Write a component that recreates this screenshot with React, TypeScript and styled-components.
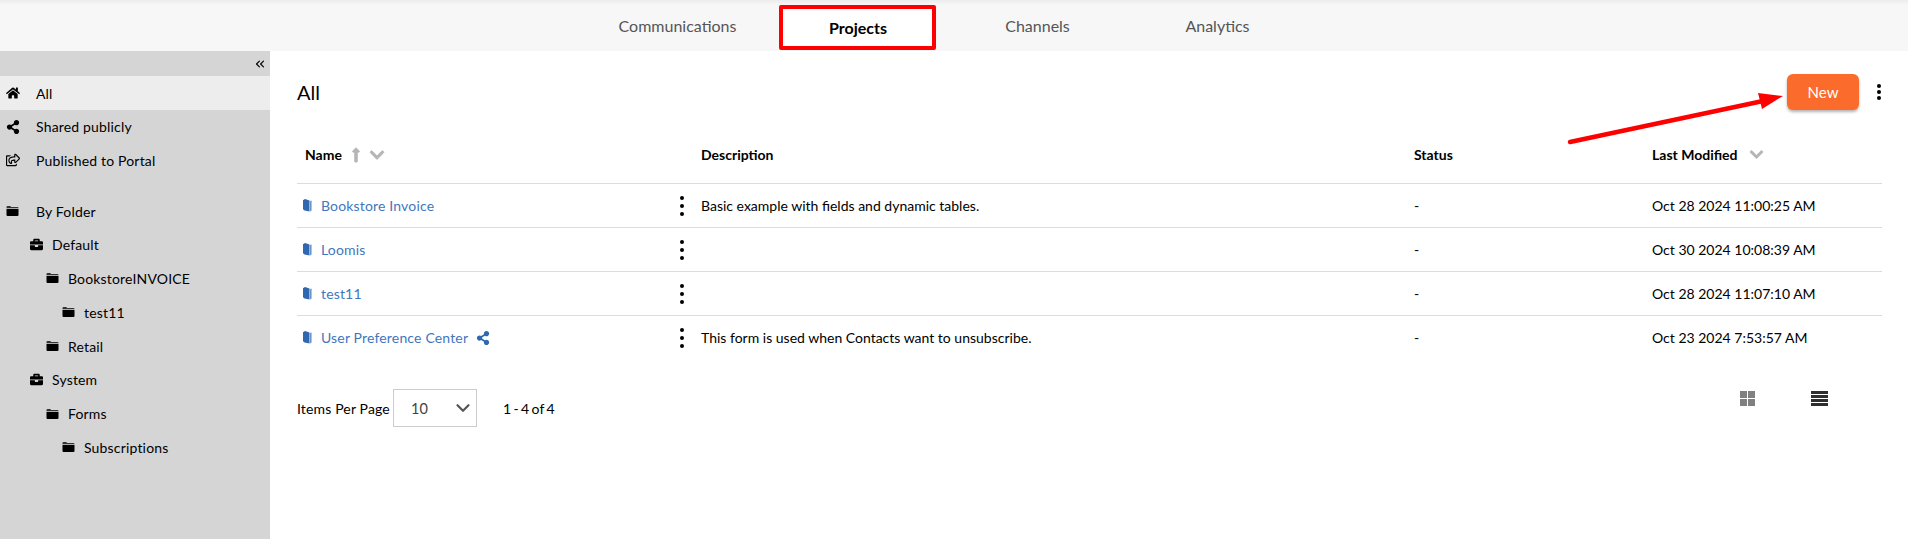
import React from 'react'
import styled, { createGlobalStyle } from 'styled-components'
import { FaHome, FaShareAlt, FaRegShareSquare, FaBriefcase, FaChevronDown, FaLongArrowAltUp } from 'react-icons/fa'
import { ChevronDown, ChevronsLeft } from 'lucide-react'

const GlobalStyle = createGlobalStyle`
  html, body {
    margin: 0;
    padding: 0;
    background: #fff;
    font-family: Lato, 'Liberation Sans', sans-serif;
    font-size: 14px;
    color: #000;
  }
`

type TabName = { label: string; active?: boolean }
const TABS: TabName[] = [
  { label: 'Communications' },
  { label: 'Projects', active: true },
  { label: 'Channels' },
  { label: 'Analytics' },
]

const PROJECTS = [
  { name: 'Bookstore Invoice', description: 'Basic example with fields and dynamic tables.', modified: 'Oct 28 2024 11:00:25 AM' },
  { name: 'Loomis', description: '', modified: 'Oct 30 2024 10:08:39 AM' },
  { name: 'test11', description: '', modified: 'Oct 28 2024 11:07:10 AM' },
  { name: 'User Preference Center', description: 'This form is used when Contacts want to unsubscribe.', modified: 'Oct 23 2024 7:53:57 AM', shared: true },
]

const FOLDERS = [
  { label: 'Default', level: 1, icon: 'case' },
  { label: 'BookstoreINVOICE', level: 2, icon: 'folder' },
  { label: 'test11', level: 3, icon: 'folder' },
  { label: 'Retail', level: 2, icon: 'folder' },
  { label: 'System', level: 1, icon: 'case' },
  { label: 'Forms', level: 2, icon: 'folder' },
  { label: 'Subscriptions', level: 3, icon: 'folder' },
]

const FolderIcon = () => (
  <svg width="13" height="10" viewBox="0 0 13 10">
    <path d="M0.5 1.2 Q0.5 0 1.5 0 H4 Q4.8 0 5 1 H11.5 Q12.5 1 12.5 2 V2.3 H0.5 Z" fill="#333" />
    <path d="M0.5 3 H12.5 V9 Q12.5 10 11.5 10 H1.5 Q0.5 10 0.5 9 Z" fill="#000" />
  </svg>
)

const BookIcon = () => (
  <svg width="9" height="13" viewBox="0 0 9 13">
    <path d="M0 1.2 L2 0 L6.5 1.6 V12.6 L1.6 11.4 Q0 11 0 9.6 Z" fill="#2f68b0" />
    <path d="M7 2 L8.6 1.4 V11.6 L7 12.6 Z" fill="#6d97cc" />
  </svg>
)

const GridIcon = () => (
  <svg width="15" height="15" viewBox="0 0 15 15">
    <rect x="0" y="0" width="7" height="7" fill="#808080" />
    <rect x="8" y="0" width="7" height="7" fill="#808080" />
    <rect x="0" y="8" width="7" height="7" fill="#808080" />
    <rect x="8" y="8" width="7" height="7" fill="#808080" />
  </svg>
)

const ListIcon = () => (
  <svg width="17" height="15" viewBox="0 0 17 15">
    <rect y="0" width="17" height="3" fill="#2e2e2e" />
    <rect y="4" width="17" height="3" fill="#2e2e2e" />
    <rect y="8" width="17" height="3" fill="#2e2e2e" />
    <rect y="12" width="17" height="3" fill="#2e2e2e" />
  </svg>
)

const App = () => (
  <Page>
    <GlobalStyle />
    <Header>
      {TABS.map((tab) => (
        <Tab key={tab.label} $active={tab.active}>
          {tab.label}
        </Tab>
      ))}
    </Header>
    <Body>
      <Sidebar>
        <CollapseRow>
          <ChevronsLeft size={14} strokeWidth={2} />
        </CollapseRow>
        <NavItem $active>
          <NavIcon><FaHome size={14} /></NavIcon>
          All
        </NavItem>
        <NavItem>
          <NavIcon><FaShareAlt size={14} /></NavIcon>
          Shared publicly
        </NavItem>
        <NavItem>
          <NavIcon><FaRegShareSquare size={14} /></NavIcon>
          Published to Portal
        </NavItem>
        <NavSpacer />
        <NavItem>
          <NavIcon><FolderIcon /></NavIcon>
          By Folder
        </NavItem>
        {FOLDERS.map((folder) => (
          <FolderItem key={folder.label + folder.level} $level={folder.level}>
            <FolderGlyph>
              {folder.icon === 'case' ? <FaBriefcase size={13} /> : <FolderIcon />}
            </FolderGlyph>
            {folder.label}
          </FolderItem>
        ))}
      </Sidebar>
      <Main>
        <TitleBar>
          <PageTitle>All</PageTitle>
          <TitleActions>
            <NewButton>New</NewButton>
            <Kebab $small>
              <i /><i /><i />
            </Kebab>
          </TitleActions>
        </TitleBar>
        <Table>
          <HeadRow>
            <NameHead>
              Name
              <SortIcon $gap={6}><FaLongArrowAltUp size={16} /></SortIcon>
              <SortIcon $gap={5}><FaChevronDown size={16} /></SortIcon>
            </NameHead>
            <DescCell>Description</DescCell>
            <StatusCell>Status</StatusCell>
            <DateCell>
              Last Modified
              <SortIcon $gap={11}><FaChevronDown size={15} /></SortIcon>
            </DateCell>
          </HeadRow>
          {PROJECTS.map((project) => (
            <Row key={project.name}>
              <NameCell>
                <BookIcon />
                <ProjectLink>{project.name}</ProjectLink>
                {project.shared && <SharedIcon><FaShareAlt size={14} /></SharedIcon>}
                <KebabSlot>
                  <Kebab>
                    <i /><i /><i />
                  </Kebab>
                </KebabSlot>
              </NameCell>
              <DescCell>{project.description}</DescCell>
              <StatusCell>-</StatusCell>
              <DateCell>{project.modified}</DateCell>
            </Row>
          ))}
        </Table>
        <Footer>
          <PagerLabel>Items Per Page</PagerLabel>
          <PageSize>
            <span>10</span>
            <ChevronDown size={22} strokeWidth={2.4} color="#555" />
          </PageSize>
          <PagerCount>1 - 4 of 4</PagerCount>
          <ViewToggle>
            <GridIcon />
            <ListIcon />
          </ViewToggle>
        </Footer>
        <Arrow width="230" height="60" viewBox="0 0 230 60">
          <line x1="5" y1="53" x2="198" y2="12" stroke="#f00" strokeWidth="4.5" strokeLinecap="round" />
          <polygon points="218,7 193,4 197,20" fill="#f00" />
        </Arrow>
      </Main>
    </Body>
  </Page>
)

export default App

const Page = styled.div`
  width: 1908px;
  height: 539px;
  display: flex;
  flex-direction: column;
  overflow: hidden;
`

const Header = styled.header`
  height: 51px;
  flex: none;
  display: flex;
  justify-content: center;
  align-items: stretch;
  padding-right: 13px;
  box-sizing: border-box;
  background: linear-gradient(#ececec 0, #f7f7f7 5px);
`

const Tab = styled.div<{ $active?: boolean }>`
  width: 180px;
  display: flex;
  align-items: center;
  justify-content: center;
  font-size: 16px;
  color: ${(p) => (p.$active ? '#000' : '#555')};
  font-weight: ${(p) => (p.$active ? 700 : 400)};
  ${(p) =>
    p.$active &&
    `
    width: 157px;
    margin: 5px 12px 1px 11px;
    padding-left: 2px;
    box-sizing: border-box;
    background: #fff;
    border: 4px solid #f00;
    border-radius: 2px;
  `}
`

const Body = styled.div`
  flex: 1;
  display: flex;
  min-height: 0;
`

const Sidebar = styled.nav`
  width: 270px;
  flex: none;
  background: #d5d5d5;
  letter-spacing: 0.17px;
`

const CollapseRow = styled.div`
  height: 25px;
  display: flex;
  align-items: center;
  justify-content: flex-end;
  padding-right: 3px;
  color: #000;
`

const NavItem = styled.div<{ $active?: boolean }>`
  height: ${(p) => (p.$active ? '34px' : '33.5px')};
  display: flex;
  align-items: center;
  background: ${(p) => (p.$active ? '#ededed' : 'transparent')};
  padding-left: 6px;
`

const NavIcon = styled.span`
  width: 30px;
  display: flex;
  align-items: center;
`

const NavSpacer = styled.div`
  height: 17.3px;
`

const FolderItem = styled.div<{ $level: number }>`
  height: 33.8px;
  display: flex;
  align-items: center;
  padding-left: ${(p) => 30 + (p.$level - 1) * 16}px;
`

const FolderGlyph = styled.span`
  width: 22px;
  display: flex;
  align-items: center;
`

const Main = styled.main`
  flex: 1;
  position: relative;
  padding: 0 26px 0 27px;
  min-width: 0;
`

const TitleBar = styled.div`
  height: 84px;
  display: flex;
  align-items: center;
  justify-content: space-between;
  margin-right: -1px;
  box-sizing: border-box;
`

const PageTitle = styled.h1`
  margin: -3px 0 0;
  font-size: 20px;
  font-weight: 400;
`

const TitleActions = styled.div`
  display: flex;
  align-items: center;
  gap: 18px;
  margin-top: -3px;
  padding-right: 2px;
`

const NewButton = styled.button`
  width: 72px;
  height: 36px;
  border: 0;
  border-radius: 6px;
  background: #fb6b2b;
  color: #fff;
  font: 400 15px Lato, sans-serif;
  box-shadow: 0 2px 3px rgba(0, 0, 0, 0.3);
`

const Kebab = styled.span<{ $small?: boolean }>`
  display: inline-flex;
  flex-direction: column;
  align-items: center;
  gap: ${(p) => (p.$small ? '2px' : '4px')};

  i {
    display: block;
    width: 4px;
    height: 4px;
    border-radius: 50%;
    background: #000;
  }
`

const Table = styled.div`
  display: flex;
  flex-direction: column;
`

const HeadRow = styled.div`
  height: 49px;
  display: flex;
  align-items: center;
  font-weight: 700;
  padding-bottom: 9px;
  border-bottom: 1px solid #dcdcdc;
  box-sizing: border-box;
`

const Row = styled.div`
  height: 44px;
  display: flex;
  align-items: center;
  box-sizing: border-box;
  border-bottom: 1px solid #dcdcdc;

  &:last-child {
    border-bottom-color: transparent;
  }
`

const NameHead = styled.div`
  width: 404px;
  padding-left: 8px;
  box-sizing: border-box;
  display: flex;
  align-items: center;
`

const SortIcon = styled.span<{ $gap?: number }>`
  display: inline-flex;
  margin-left: ${(p) => p.$gap ?? 10}px;
  color: #b5b5b5;

  svg {
    stroke: currentColor;
    stroke-width: 30;
  }
`

const NameCell = styled.div`
  width: 404px;
  padding-left: 6px;
  box-sizing: border-box;
  display: flex;
  align-items: center;
`

const ProjectLink = styled.a`
  margin-left: 9px;
  color: #3f77bd;
  letter-spacing: 0.16px;
`

const SharedIcon = styled.span`
  display: inline-flex;
  margin-left: 8px;
  color: #2f68b0;
`

const KebabSlot = styled.span`
  margin-left: auto;
  margin-right: 17px;
  display: inline-flex;
`

const DescCell = styled.div`
  width: 713px;
`

const StatusCell = styled.div`
  width: 238px;
`

const DateCell = styled.div`
  flex: 1;
  display: flex;
  align-items: center;
`

const Footer = styled.div`
  margin-top: 29px;
  height: 38px;
  display: flex;
  align-items: center;
`

const PagerLabel = styled.span`
  width: 96px;
  letter-spacing: 0.15px;
  white-space: nowrap;
`

const PageSize = styled.div`
  width: 84px;
  height: 38px;
  box-sizing: border-box;
  border: 1px solid #ccc;
  display: flex;
  align-items: center;
  justify-content: space-between;
  padding: 0 2px 0 17px;
  font-size: 14.5px;
  color: #444;
`

const PagerCount = styled.span`
  margin-left: 26px;
  word-spacing: -1.2px;
`

const ViewToggle = styled.div`
  margin-left: auto;
  margin-right: 54px;
  margin-top: -19px;
  display: flex;
  align-items: center;
  gap: 56px;
`

const Arrow = styled.svg`
  position: absolute;
  left: 1295px;
  top: 38px;
`
